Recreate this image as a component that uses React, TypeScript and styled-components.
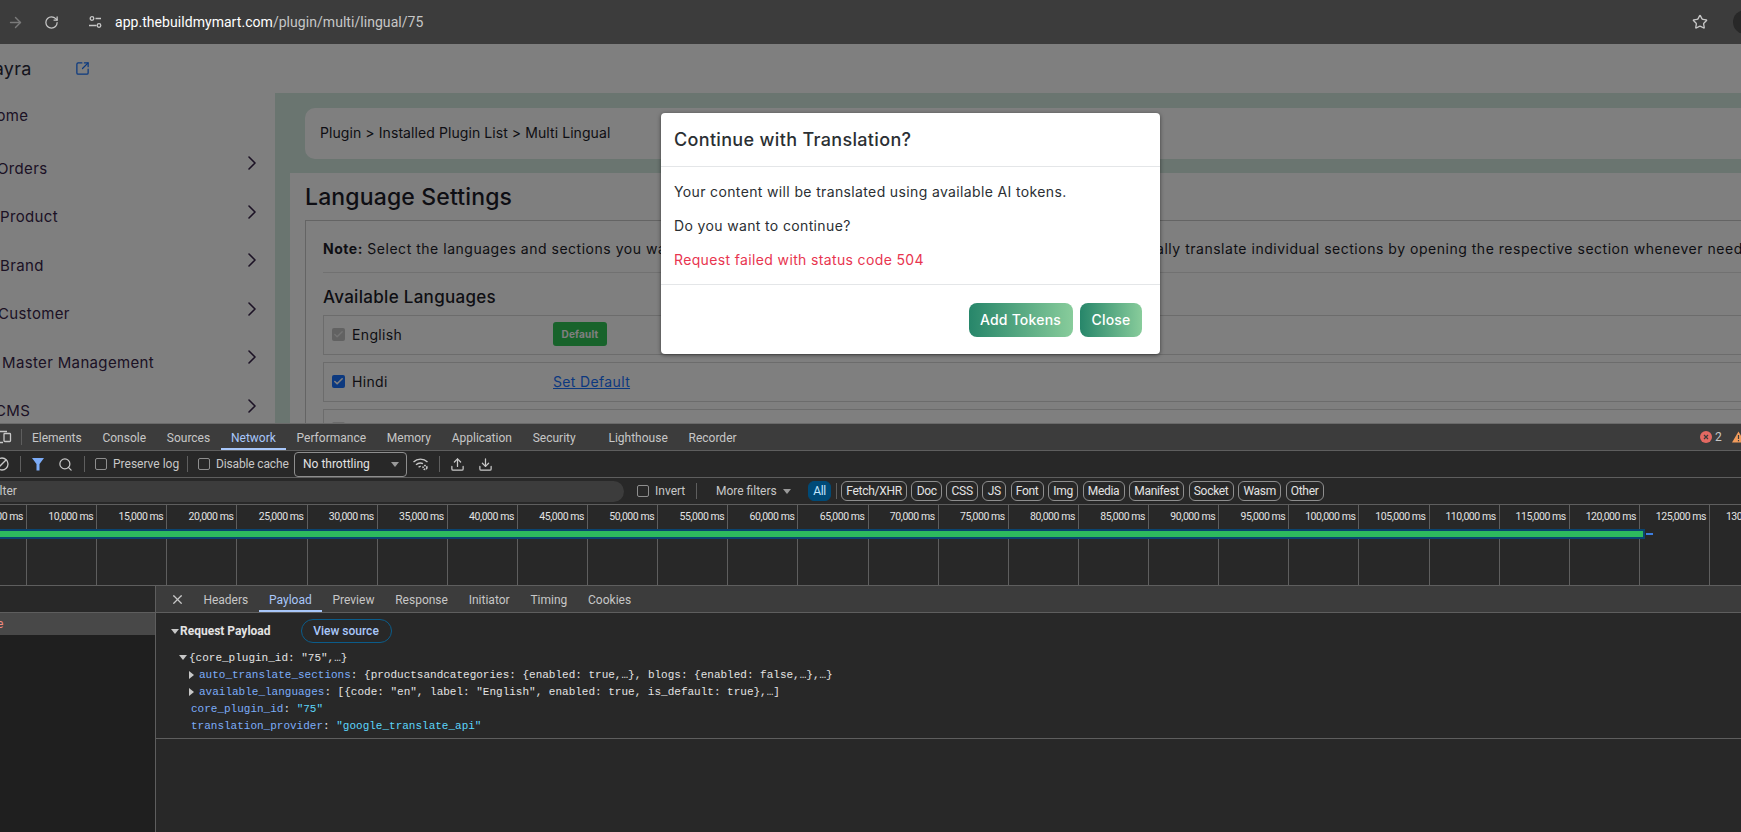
import React from 'react';
import styled, { createGlobalStyle } from 'styled-components';
import {
  ArrowRight,
  Check,
  ChevronRight,
  Download,
  RotateCw,
  Search,
  SquareArrowOutUpRight,
  Star,
  Upload,
  X,
} from 'lucide-react';

const GlobalStyle = createGlobalStyle`
  html, body {
    margin: 0;
    padding: 0;
    background: #282828;
  }
  * {
    box-sizing: border-box;
  }
`;

const Window = styled.div`
  width: 1741px;
  height: 832px;
  display: flex;
  flex-direction: column;
  overflow: hidden;
  font-family: Roboto, 'Liberation Sans', sans-serif;
`;

/* browser chrome */
const ChromeBar = styled.div`
  height: 44px;
  flex: none;
  background: #3c3c3c;
  display: flex;
  align-items: center;
  color: #c7c7c7;
  padding-left: 7px;
`;

const ChromeIcon = styled.span<{ $w: number }>`
  width: ${({ $w }) => $w}px;
  flex: none;
  display: flex;
  align-items: center;
`;

const Url = styled.div`
  font-size: 14px;
  color: #c7c7c7;
  flex: 1;
  letter-spacing: 0.05px;
  b {
    font-weight: 400;
    color: #fff;
  }
`;

const Avatar = styled.div`
  width: 24px;
  height: 24px;
  border-radius: 50%;
  background: #282828;
  margin: 0 -16px 0 25px;
  flex: none;
`;

/* page behind the dialog */
const Page = styled.div`
  position: relative;
  height: 379px;
  flex: none;
  display: flex;
  background: #fff;
  overflow: hidden;
  font-family: Inter, 'Noto Sans', sans-serif;
  color: #1c1c28;
`;

const Sidebar = styled.div`
  width: 275px;
  flex: none;
`;

const BrandRow = styled.div`
  height: 48px;
  display: flex;
  align-items: center;
  font-size: 18px;
  letter-spacing: 0.3px;
  color: #2a2a3a;
  margin-left: -19px;
  gap: 43px;
  svg {
    color: #1672ff;
  }
`;

const NavRow = styled.div<{ $home?: boolean }>`
  height: ${({ $home }) => ($home ? 46 : 48.5)}px;
  margin-bottom: ${({ $home }) => ($home ? 6 : 0)}px;
  padding-right: 11px;
  display: flex;
  align-items: center;
  justify-content: space-between;
  font-size: 15px;
  letter-spacing: 0.35px;
  color: #38254a;
  svg {
    margin-bottom: 10px;
  }
`;

const NavLabel = styled.span<{ $offset: number }>`
  margin-left: ${({ $offset }) => $offset}px;
`;

const Main = styled.div`
  flex: 1;
  min-width: 0;
  margin-top: 49px;
  padding: 15px 0 0 15px;
  background: #d5eae1;
`;

const Breadcrumb = styled.div`
  height: 51px;
  margin: 0 0 14px 15px;
  padding: 0 0 2px 15px;
  display: flex;
  align-items: center;
  background: #fff;
  border-radius: 10px 0 0 10px;
  font-size: 14px;
  letter-spacing: 0.08px;
`;

const Panel = styled.div`
  background: #fff;
  padding-left: 15px;
  height: 300px;
`;

const PanelTitle = styled.h2`
  margin: 0;
  height: 47px;
  display: flex;
  align-items: center;
  font-size: 23px;
  font-weight: 500;
  letter-spacing: 0.15px;
`;

const SettingsCard = styled.div`
  border: 1px solid #c8c8c8;
  border-right: none;
  padding: 17px 0 0 17px;
`;

const Note = styled.p`
  margin: 0;
  height: 35px;
  font-size: 14px;
  line-height: 22px;
  letter-spacing: 0.52px;
  white-space: nowrap;
  border-bottom: 1px solid #e2e2e2;
  b {
    font-weight: 700;
  }
`;

const SectionTitle = styled.h3`
  margin: 0;
  height: 42px;
  display: flex;
  align-items: center;
  padding-top: 5px;
  font-size: 17px;
  font-weight: 500;
  letter-spacing: 0.3px;
`;

const LangRow = styled.div`
  height: 40px;
  margin-bottom: 7px;
  padding: 0 0 2px 8px;
  display: flex;
  align-items: center;
  border: 1px solid #d8d8d8;
  border-right: none;
  font-size: 14px;
  letter-spacing: 0.35px;
`;

const CheckBox = styled.span<{ $tone: string }>`
  width: 13px;
  height: 13px;
  flex: none;
  margin-right: 7px;
  border-radius: 2px;
  background: ${({ $tone }) => $tone};
  display: flex;
  align-items: center;
  justify-content: center;
  color: #fff;
`;

const LangName = styled.span`
  width: 201px;
  flex: none;
`;

const DefaultBadge = styled.span`
  width: 54px;
  height: 24px;
  border-radius: 3px;
  background: #30c656;
  color: #fff;
  font-size: 10px;
  font-weight: 700;
  letter-spacing: 0.2px;
  display: flex;
  align-items: center;
  justify-content: center;
`;

const SetDefault = styled.a`
  color: #1872ff;
  text-decoration: underline;
`;

const Overlay = styled.div`
  position: absolute;
  inset: 0;
  background: rgba(0, 0, 0, 0.5);
`;

const Modal = styled.div`
  position: absolute;
  left: 661px;
  top: 69px;
  width: 499px;
  height: 241px;
  background: #fff;
  border-radius: 4px;
  box-shadow: 0 1px 4px rgba(0, 0, 0, 0.5);
  display: flex;
  flex-direction: column;
  color: #2b2f33;
`;

const ModalHeader = styled.div`
  height: 54px;
  padding-left: 13px;
  display: flex;
  align-items: center;
  border-bottom: 1px solid #e4e6e8;
  font-size: 18px;
  font-weight: 500;
  letter-spacing: 0.33px;
`;

const ModalBody = styled.div`
  height: 118px;
  padding: 7px 13px 0;
  border-bottom: 1px solid #e4e6e8;
`;

const ModalLine = styled.p<{ $error?: boolean }>`
  margin: 0;
  height: 34px;
  display: flex;
  align-items: center;
  font-size: 14px;
  letter-spacing: 0.36px;
  color: ${({ $error }) => ($error ? '#e8354f' : 'inherit')};
`;

const ModalFooter = styled.div`
  flex: 1;
  padding: 0 18px 0 0;
  display: flex;
  align-items: center;
  justify-content: flex-end;
  gap: 7.5px;
`;

const GradientButton = styled.button<{ $w: number }>`
  width: ${({ $w }) => $w}px;
  height: 34px;
  border: none;
  border-radius: 8px;
  background: linear-gradient(90deg, #27866a, #88cc9b);
  color: #fff;
  font-family: inherit;
  font-size: 14px;
  font-weight: 500;
  letter-spacing: 0.2px;
  padding: 0;
`;

/* devtools */
const DevTools = styled.div`
  flex: 1;
  display: flex;
  flex-direction: column;
  background: #282828;
  color: #c7c7c7;
  font-size: 12px;
  min-height: 0;
`;

const TabBar = styled.div`
  height: 28px;
  flex: none;
  display: flex;
  align-items: stretch;
  background: #3c3c3c;
  border-top: 1px solid #6a6a6a;
  border-bottom: 1px solid #5e5e5e;
  position: relative;
`;

const Tab = styled.div<{ $active?: boolean; $lead?: number }>`
  padding: 2px 10.4px 0;
  margin-left: ${({ $lead }) => $lead ?? 0}px;
  display: flex;
  align-items: center;
  color: ${({ $active }) => ($active ? '#a8c7fa' : '#c7c7c7')};
  box-shadow: ${({ $active }) => ($active ? 'inset 0 -2px 0 #a8c7fa' : 'none')};
`;

const DeviceSlot = styled.div`
  width: 21.5px;
  flex: none;
  display: flex;
  align-items: center;
  padding-right: 9px;
  border-right: 1px solid #5e5e5e;
  margin: 5px 0;
  svg {
    flex: none;
  }
`;

const Counters = styled.div`
  margin-left: auto;
  display: flex;
  align-items: center;
  gap: 3px;
  margin-right: -4px;
`;

const ToolRow = styled.div`
  height: 27px;
  flex: none;
  display: flex;
  align-items: center;
  border-bottom: 1px solid #5e5e5e;
`;

const ToolSep = styled.span<{ $ml: number; $mr: number }>`
  width: 1px;
  height: 16px;
  flex: none;
  background: #5e5e5e;
  margin: 0 ${({ $mr }) => $mr}px 0 ${({ $ml }) => $ml}px;
`;

const ToolIcon = styled.span<{ $w: number; $ml?: number }>`
  width: ${({ $w }) => $w}px;
  flex: none;
  margin-left: ${({ $ml }) => $ml ?? 0}px;
  display: flex;
  align-items: center;
  justify-content: center;
  svg {
    flex: none;
  }
`;

const DevCheck = styled.span`
  width: 12px;
  height: 12px;
  flex: none;
  border: 1px solid #8e8e8e;
  border-radius: 2px;
  margin-right: 6px;
`;

const Plain = styled.span<{ $w?: number }>`
  flex: none;
  white-space: nowrap;
  ${({ $w }) => ($w ? `width: ${$w}px;` : '')}
`;

const DisableCache = styled(Plain)`
  letter-spacing: -0.15px;
`;

const ThrottleSelect = styled.div`
  width: 113px;
  height: 25px;
  flex: none;
  margin-left: 5px;
  padding: 0 7px 0 8px;
  border: 1px solid #8e8e8e;
  border-radius: 4px;
  display: flex;
  align-items: center;
  justify-content: space-between;
  color: #e3e3e3;
`;

const Caret = styled.span`
  width: 0;
  height: 0;
  flex: none;
  border-left: 4px solid transparent;
  border-right: 4px solid transparent;
  border-top: 5px solid #9a9a9a;
`;

const FilterInput = styled.div`
  width: 624px;
  height: 21px;
  padding-left: 0;
  flex: none;
  background: #3c3c3c;
  border-radius: 0 11px 11px 0;
  display: flex;
  align-items: center;
  overflow: hidden;
`;

const FilterClip = styled.span`
  margin-left: -10px;
`;

const Chip = styled.span<{ $active?: boolean }>`
  height: 20px;
  flex: none;
  padding: 0 4.2px;
  margin-right: 4.5px;
  display: flex;
  align-items: center;
  border-radius: 6px;
  letter-spacing: -0.3px;
  border: 1px solid ${({ $active }) => ($active ? '#004a77' : '#8e8e8e')};
  background: ${({ $active }) => ($active ? '#004a77' : 'transparent')};
  color: ${({ $active }) => ($active ? '#c2e7ff' : '#e3e3e3')};
`;

const Overview = styled.div`
  height: 81px;
  flex: none;
  position: relative;
  display: flex;
  overflow: hidden;
  border-bottom: 1px solid #5e5e5e;
`;

const TimeColumn = styled.div`
  width: 70.13px;
  flex: none;
  height: 100%;
  padding: 5px 3px 0 0;
  border-right: 1px solid #5e5e5e;
  text-align: right;
  font-size: 10.5px;
  letter-spacing: -0.45px;
  white-space: nowrap;
  color: #e3e3e3;
  &:first-child {
    margin-left: -43.13px;
  }
`;

const BarTrack = styled.div`
  position: absolute;
  left: 0;
  top: 24px;
  width: 1645px;
  height: 10px;
  padding: 2px 2px 2px 0;
  background: #0a4470;
`;

const BarFill = styled.div`
  height: 100%;
  background: #2dba5e;
`;

const BarTail = styled.div`
  position: absolute;
  left: 1646px;
  top: 28px;
  width: 7px;
  height: 2px;
  background: #3d7de0;
`;

const DetailSplit = styled.div`
  flex: 1;
  min-height: 0;
  display: flex;
`;

const RequestList = styled.div`
  width: 156px;
  flex: none;
  background: #1f1f1f;
  border-right: 1px solid #5e5e5e;
`;

const ListHeader = styled.div`
  height: 27px;
  background: #282828;
  border-bottom: 1px solid #5e5e5e;
`;

const SelectedRow = styled.div`
  height: 22px;
  background: #484848;
  color: #f28b82;
  display: flex;
  align-items: center;
  overflow: hidden;
`;

const ClippedName = styled.span`
  margin-left: -3px;
`;

const DetailPane = styled.div`
  flex: 1;
  min-width: 0;
`;

const DetailTabs = styled.div`
  height: 27px;
  display: flex;
  align-items: stretch;
  background: #3c3c3c;
  border-bottom: 1px solid #5e5e5e;
`;

const CloseSlot = styled.div`
  width: 37px;
  flex: none;
  padding-left: 14px;
  display: flex;
  align-items: center;
`;

const PayloadBody = styled.div`
  height: 126px;
  padding: 6px 0 0 15px;
  border-bottom: 1px solid #5e5e5e;
`;

const PayloadHead = styled.div`
  height: 24px;
  display: flex;
  align-items: center;
  margin-bottom: 6px;
  font-weight: 700;
  color: #e3e3e3;
`;

const PayloadTitle = styled.span`
  margin-left: 1px;
  white-space: nowrap;
`;

const TreeArrow = styled.span<{ $open?: boolean }>`
  width: 0;
  height: 0;
  flex: none;
  ${({ $open }) =>
    $open
      ? `border-left: 4px solid transparent; border-right: 4px solid transparent; border-top: 5px solid #c7c7c7;`
      : `border-top: 4px solid transparent; border-bottom: 4px solid transparent; border-left: 5px solid #c7c7c7;`}
`;

const ViewSource = styled.span`
  width: 91px;
  height: 24px;
  margin-left: 30px;
  border: 1px solid #0b5c8a;
  border-radius: 12px;
  color: #a8c7fa;
  font-weight: 500;
  display: flex;
  align-items: center;
  justify-content: center;
`;

const TreeLine = styled.div<{ $indent: number }>`
  height: 17px;
  padding-left: ${({ $indent }) => $indent}px;
  display: flex;
  align-items: center;
  font-family: 'Liberation Mono', monospace;
  font-size: 11px;
  white-space: pre;
  color: #e3e3e3;
`;

const TreeSlot = styled.span`
  width: 10px;
  flex: none;
  display: flex;
  align-items: center;
`;

const Key = styled.span`
  color: #7cacf8;
`;

const Str = styled.span`
  color: #5cd5fb;
`;

const navItems = [
  { label: 'Orders', offset: -3 },
  { label: 'Product', offset: 0 },
  { label: 'Brand', offset: 0 },
  { label: 'Customer', offset: -2 },
  { label: 'Master Management', offset: 2 },
  { label: 'CMS', offset: -5 },
];

const devTabs = ['Elements', 'Console', 'Sources', 'Network', 'Performance', 'Memory', 'Application', 'Security', 'Lighthouse', 'Recorder'];
const detailTabs = ['Headers', 'Payload', 'Preview', 'Response', 'Initiator', 'Timing', 'Cookies'];
const chips = ['Fetch/XHR', 'Doc', 'CSS', 'JS', 'Font', 'Img', 'Media', 'Manifest', 'Socket', 'Wasm', 'Other'];
const ticks = Array.from({ length: 26 }, (_, i) => `${((i + 1) * 5000).toLocaleString('en-US')} ms`);

const TuneIcon = () => (
  <svg width="16" height="16" viewBox="0 0 16 16" fill="none" stroke="#c7c7c7" strokeWidth="1.3">
    <circle cx="5" cy="4.5" r="1.8" />
    <path d="M8.5 4.5H14M2 11.5h7.5" />
    <circle cx="12" cy="11.5" r="1.8" />
  </svg>
);

const DeviceIcon = () => (
  <svg width="12" height="14" viewBox="0 0 12 14" fill="none" stroke="#c7c7c7" strokeWidth="1.3">
    <rect x="4" y="3.5" width="6.5" height="8" rx="0.8" />
    <path d="M0 1.5h7M0 12.5h3" />
  </svg>
);

const BlockIcon = () => (
  <svg width="16" height="16" viewBox="0 0 16 16" fill="none" stroke="#c7c7c7" strokeWidth="1.3">
    <circle cx="8" cy="8" r="6" />
    <path d="M12.2 3.8l-8.4 8.4" />
  </svg>
);

const FunnelIcon = () => (
  <svg width="14" height="16" viewBox="0 0 14 16" fill="#7cacf8">
    <path d="M1 2h12L8.5 8v6.5h-3V8z" />
  </svg>
);

const WifiGearIcon = () => (
  <svg width="18" height="16" viewBox="0 0 18 16" fill="none" stroke="#c7c7c7" strokeWidth="1.3">
    <path d="M1.5 6a10 10 0 0 1 14 0M4 8.8a6.5 6.5 0 0 1 7-1.2M6.6 11.2a3 3 0 0 1 2.2-.8" />
    <circle cx="13" cy="11.5" r="1.9" strokeWidth="1.6" strokeDasharray="1.6 0.8" />
  </svg>
);

const ErrorIcon = () => (
  <svg width="12" height="12" viewBox="0 0 12 12">
    <circle cx="6" cy="6" r="6" fill="#e46962" />
    <path d="M4 4l4 4M8 4l-4 4" stroke="#3c3c3c" strokeWidth="1.2" />
  </svg>
);

const WarnIcon = () => (
  <svg width="13" height="12" viewBox="0 0 13 12">
    <path d="M6.5 0.5L13 11.5H0z" fill="#f29c5c" />
    <path d="M6.5 4v4M6.5 9v1.2" stroke="#3c3c3c" strokeWidth="1.2" />
  </svg>
);

const App: React.FC = () => {
  return (
    <Window>
      <GlobalStyle />
      <ChromeBar>
        <ChromeIcon $w={37}>
          <ArrowRight size={17} color="#7a7a7a" />
        </ChromeIcon>
        <ChromeIcon $w={43}>
          <RotateCw size={15} color="#c7c7c7" />
        </ChromeIcon>
        <ChromeIcon $w={28}>
          <TuneIcon />
        </ChromeIcon>
        <Url>
          <b>app.thebuildmymart.com</b>/plugin/multi/lingual/75
        </Url>
        <Star size={16} color="#c7c7c7" />
        <Avatar />
      </ChromeBar>

      <Page>
        <Sidebar>
          <BrandRow>
            <span>Aayra</span>
            <SquareArrowOutUpRight size={15} />
          </BrandRow>
          <NavRow $home>
            <NavLabel $offset={-15}>Home</NavLabel>
          </NavRow>
          {navItems.map((item) => (
            <NavRow key={item.label}>
              <NavLabel $offset={item.offset}>{item.label}</NavLabel>
              <ChevronRight size={24} strokeWidth={1.6} />
            </NavRow>
          ))}
        </Sidebar>
        <Main>
          <Breadcrumb>Plugin &gt; Installed Plugin List &gt; Multi Lingual</Breadcrumb>
          <Panel>
            <PanelTitle>Language Settings</PanelTitle>
            <SettingsCard>
              <Note>
                <b>Note:</b> Select the languages and sections you want to auto-translate. Saved pages are queued and you can also manually translate individual sections by opening the respective section whenever needed.
              </Note>
              <SectionTitle>Available Languages</SectionTitle>
              <LangRow>
                <CheckBox $tone="#c4c4c4">
                  <Check size={11} strokeWidth={3} color="#e8e8e8" />
                </CheckBox>
                <LangName>English</LangName>
                <DefaultBadge>Default</DefaultBadge>
              </LangRow>
              <LangRow>
                <CheckBox $tone="#1872ff">
                  <Check size={11} strokeWidth={3.5} />
                </CheckBox>
                <LangName>Hindi</LangName>
                <SetDefault>Set Default</SetDefault>
              </LangRow>
              <LangRow>
                <CheckBox $tone="#d8d8d8" />
                <LangName>Marathi</LangName>
              </LangRow>
            </SettingsCard>
          </Panel>
        </Main>
        <Overlay />
        <Modal>
          <ModalHeader>Continue with Translation?</ModalHeader>
          <ModalBody>
            <ModalLine>Your content will be translated using available AI tokens.</ModalLine>
            <ModalLine>Do you want to continue?</ModalLine>
            <ModalLine $error>Request failed with status code 504</ModalLine>
          </ModalBody>
          <ModalFooter>
            <GradientButton $w={104}>Add Tokens</GradientButton>
            <GradientButton $w={62}>Close</GradientButton>
          </ModalFooter>
        </Modal>
      </Page>

      <DevTools>
        <TabBar>
          <DeviceSlot>
            <DeviceIcon />
          </DeviceSlot>
          {devTabs.map((tab) => (
            <Tab key={tab} $active={tab === 'Network'} $lead={tab === 'Lighthouse' ? 12 : 0}>
              {tab}
            </Tab>
          ))}
          <Counters>
            <ErrorIcon />
            <Plain $w={14}>2</Plain>
            <WarnIcon />
          </Counters>
        </TabBar>

        <ToolRow>
          <ToolIcon $w={4}>
            <BlockIcon />
          </ToolIcon>
          <ToolSep $ml={15.5} $mr={10.5} />
          <ToolIcon $w={14}>
            <FunnelIcon />
          </ToolIcon>
          <ToolIcon $w={16} $ml={12}>
            <Search size={15} />
          </ToolIcon>
          <ToolSep $ml={11} $mr={10} />
          <DevCheck />
          <Plain $w={74}>Preserve log</Plain>
          <ToolSep $ml={0} $mr={10} />
          <DevCheck />
          <DisableCache $w={73}>Disable cache</DisableCache>
          <ThrottleSelect>
            No throttling
            <Caret />
          </ThrottleSelect>
          <ToolIcon $w={28}>
            <WifiGearIcon />
          </ToolIcon>
          <ToolSep $ml={4} $mr={4} />
          <ToolIcon $w={26}>
            <Upload size={15} />
          </ToolIcon>
          <ToolIcon $w={30}>
            <Download size={15} />
          </ToolIcon>
        </ToolRow>

        <ToolRow>
          <FilterInput>
            <FilterClip>Filter</FilterClip>
          </FilterInput>
          <Plain $w={13} />
          <DevCheck />
          <Plain $w={41}>Invert</Plain>
          <ToolSep $ml={0} $mr={19} />
          <Plain $w={67}>More filters</Plain>
          <Caret />
          <Plain $w={17} />
          <Chip $active>All</Chip>
          <ToolSep $ml={0} $mr={4.5} />
          {chips.map((chip) => (
            <Chip key={chip}>{chip}</Chip>
          ))}
        </ToolRow>

        <Overview>
          {ticks.map((tick) => (
            <TimeColumn key={tick}>{tick}</TimeColumn>
          ))}
          <BarTrack>
            <BarFill />
          </BarTrack>
          <BarTail />
        </Overview>

        <DetailSplit>
          <RequestList>
            <ListHeader />
            <SelectedRow>
              <ClippedName>e</ClippedName>
            </SelectedRow>
          </RequestList>
          <DetailPane>
            <DetailTabs>
              <CloseSlot>
                <X size={15} />
              </CloseSlot>
              {detailTabs.map((tab) => (
                <Tab key={tab} $active={tab === 'Payload'}>
                  {tab}
                </Tab>
              ))}
            </DetailTabs>
            <PayloadBody>
              <PayloadHead>
                <TreeArrow $open />
                <PayloadTitle>Request Payload</PayloadTitle>
                <ViewSource>View source</ViewSource>
              </PayloadHead>
              <TreeLine $indent={8}>
                <TreeSlot>
                  <TreeArrow $open />
                </TreeSlot>
                {'{core_plugin_id: "75",…}'}
              </TreeLine>
              <TreeLine $indent={18}>
                <TreeSlot>
                  <TreeArrow />
                </TreeSlot>
                <Key>auto_translate_sections</Key>
                {': {productsandcategories: {enabled: true,…}, blogs: {enabled: false,…},…}'}
              </TreeLine>
              <TreeLine $indent={18}>
                <TreeSlot>
                  <TreeArrow />
                </TreeSlot>
                <Key>available_languages</Key>
                {': [{code: "en", label: "English", enabled: true, is_default: true},…]'}
              </TreeLine>
              <TreeLine $indent={20}>
                <Key>core_plugin_id</Key>
                {': '}
                <Str>"75"</Str>
              </TreeLine>
              <TreeLine $indent={20}>
                <Key>translation_provider</Key>
                {': '}
                <Str>"google_translate_api"</Str>
              </TreeLine>
            </PayloadBody>
          </DetailPane>
        </DetailSplit>
      </DevTools>
    </Window>
  );
};

export default App;
